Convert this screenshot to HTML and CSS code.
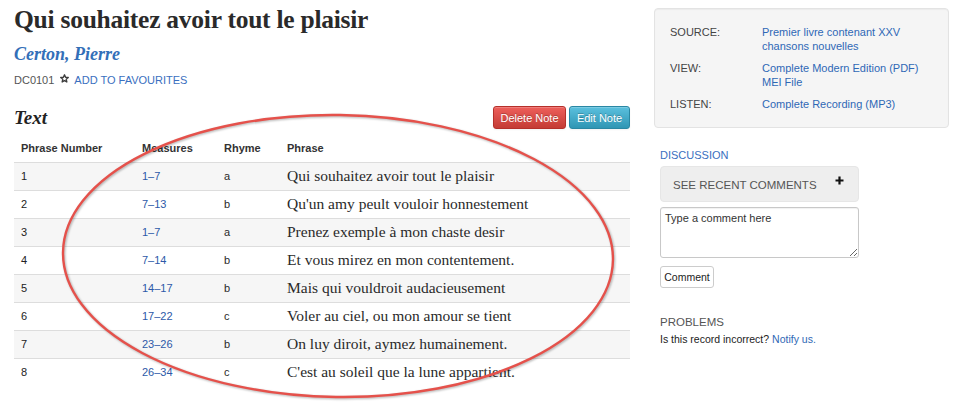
FILE: index.html
```html
<!DOCTYPE html>
<html lang="fr">
<head>
<meta charset="utf-8">
<title>Qui souhaitez avoir tout le plaisir</title>
<link rel="stylesheet" href="styles.css">
</head>
<body>
<div class="page">
  <main class="main">
    <h1 class="title">Qui souhaitez avoir tout le plaisir</h1>
    <h2 class="author"><a href="#">Certon, Pierre</a></h2>
    <div class="meta">
      <span class="code">DC0101</span>
      <svg class="star" width="9" height="9" viewBox="0 0 10 10"><polygon points="5,0.9 6.2,3.7 9.2,3.9 6.9,5.9 7.6,8.9 5,7.3 2.4,8.9 3.1,5.9 0.8,3.9 3.8,3.7" fill="none" stroke="#3d3d3d" stroke-width="1.5" stroke-linejoin="round"/></svg>
      <a class="fav" href="#">ADD TO FAVOURITES</a>
    </div>
    <div class="section-head">
      <h3 class="section-title">Text</h3>
      <div class="actions">
        <button class="btn btn-danger">Delete Note</button>
        <button class="btn btn-info">Edit Note</button>
      </div>
    </div>
    <table class="phrases">
      <colgroup>
        <col class="c-num"><col class="c-meas"><col class="c-rhyme"><col class="c-phrase">
      </colgroup>
      <thead>
        <tr><th>Phrase Number</th><th>Measures</th><th>Rhyme</th><th>Phrase</th></tr>
      </thead>
      <tbody>
        <tr><td class="num">1</td><td><a href="#">1–7</a></td><td>a</td><td class="verse">Qui souhaitez avoir tout le plaisir</td></tr>
        <tr><td class="num">2</td><td><a href="#">7–13</a></td><td>b</td><td class="verse">Qu'un amy peult vouloir honnestement</td></tr>
        <tr><td class="num">3</td><td><a href="#">1–7</a></td><td>a</td><td class="verse">Prenez exemple à mon chaste desir</td></tr>
        <tr><td class="num">4</td><td><a href="#">7–14</a></td><td>b</td><td class="verse">Et vous mirez en mon contentement.</td></tr>
        <tr><td class="num">5</td><td><a href="#">14–17</a></td><td>b</td><td class="verse">Mais qui vouldroit audacieusement</td></tr>
        <tr><td class="num">6</td><td><a href="#">17–22</a></td><td>c</td><td class="verse">Voler au ciel, ou mon amour se tient</td></tr>
        <tr><td class="num">7</td><td><a href="#">23–26</a></td><td>b</td><td class="verse">On luy diroit, aymez humainement.</td></tr>
        <tr><td class="num">8</td><td><a href="#">26–34</a></td><td>c</td><td class="verse">C'est au soleil que la lune appartient.</td></tr>
      </tbody>
    </table>
  </main>
  <aside class="side">
    <div class="well">
      <dl class="info">
        <dt>SOURCE:</dt>
        <dd><a href="#">Premier livre contenant XXV chansons nouvelles</a></dd>
        <dt>VIEW:</dt>
        <dd><a href="#">Complete Modern Edition (PDF)</a><br><a href="#">MEI File</a></dd>
        <dt>LISTEN:</dt>
        <dd><a href="#">Complete Recording (MP3)</a></dd>
      </dl>
    </div>
    <div class="discussion">
      <div class="side-label blue">DISCUSSION</div>
      <div class="comments-toggle">
        <span>SEE RECENT COMMENTS</span>
        <svg class="plus" width="9" height="9" viewBox="0 0 9 9"><path d="M4.5 0.5V8.5M0.5 4.5H8.5" stroke="#111" stroke-width="2.2"/></svg>
      </div>
      <textarea class="comment-box" placeholder="Type a comment here"></textarea>
      <button class="btn-plain">Comment</button>
      <div class="side-label problems">PROBLEMS</div>
      <p class="problem-text">Is this record incorrect? <a href="#">Notify us.</a></p>
    </div>
  </aside>
</div>
<svg class="annotation" width="978" height="404" viewBox="0 0 978 404">
  <ellipse cx="338" cy="256" rx="275" ry="141" transform="rotate(0.8 338 256)" fill="none" stroke="#e5514b" stroke-width="2.4"/>
</svg>
</body>
</html>
```
FILE: styles.css
```css
* { box-sizing: border-box; }
html, body { margin: 0; padding: 0; background: #fff; }
body {
  font-family: "Liberation Sans", Arial, sans-serif;
  font-size: 11px;
  color: #333;
  width: 978px;
  height: 404px;
  overflow: hidden;
  position: relative;
}
a { color: #2f68b5; text-decoration: none; }

.page {
  display: grid;
  grid-template-columns: 616px 295px;
  column-gap: 24px;
  padding-left: 14px;
}

.title {
  margin: 4px 0 0;
  font-family: "Liberation Serif", "Times New Roman", serif;
  font-weight: bold;
  font-size: 25.5px;
  line-height: 32px;
  letter-spacing: -0.25px;
  color: #2a2a2a;
}
.author {
  margin: 6px 0 0;
  font-family: "Liberation Serif", "Times New Roman", serif;
  font-style: italic;
  font-weight: bold;
  font-size: 18px;
  line-height: 24px;
}
.author a { color: #336fb8; }

.meta {
  margin-top: 6px;
  line-height: 16px;
  font-size: 11px;
  display: flex;
  align-items: center;
}
.code { color: #555; }
.star { margin: -3px 5px 0 6px; }
.fav { color: #3a6fc0; }

.section-head {
  margin-top: 18px;
  display: flex;
  justify-content: space-between;
  align-items: flex-start;
  height: 24px;
}
.section-title {
  margin: 0;
  font-family: "Liberation Serif", "Times New Roman", serif;
  font-style: italic;
  font-weight: bold;
  font-size: 19px;
  line-height: 24px;
  color: #222;
}
.actions { display: flex; gap: 3px; }
.btn {
  height: 23px;
  border-radius: 3px;
  font-family: "Liberation Sans", Arial, sans-serif;
  font-size: 11px;
  color: #fff;
  padding: 0;
  white-space: nowrap;
  text-align: center;
  text-shadow: 0 -1px 0 rgba(0,0,0,0.25);
  box-shadow: inset 0 1px 0 rgba(255,255,255,0.2), 0 1px 2px rgba(0,0,0,0.05);
}
.btn-danger {
  width: 73px;
  background: linear-gradient(#ee5f5b, #c43c35);
  border: 1px solid #b5302a;
}
.btn-info {
  width: 61px;
  background: linear-gradient(#5bc0de, #2f96b4);
  border: 1px solid #2a87a3;
}

.phrases {
  margin-top: 5px;
  width: 616px;
  border-collapse: collapse;
  table-layout: fixed;
}
.c-num { width: 121px; }
.c-meas { width: 82px; }
.c-rhyme { width: 63px; }
.phrases th, .phrases td {
  text-align: left;
  padding: 3px 7px 4px;
  line-height: 20px;
  vertical-align: top;
  white-space: nowrap;
}
.phrases th { font-weight: bold; font-size: 11px; color: #333; }
.phrases td { border-top: 1px solid #dddddd; font-size: 11px; color: #2a2a2a; }
.phrases td.num { color: #222; }
.phrases tbody tr:nth-child(odd) td { background: #f6f6f6; }
.phrases td a { color: #2d59a8; }
.phrases td.verse {
  font-family: "Liberation Serif", "Times New Roman", serif;
  font-size: 15.5px;
  color: #2a2a2a;
}

.side { padding-top: 8px; }
.well {
  height: 120px;
  background: #f5f5f5;
  border: 1px solid #e3e3e3;
  border-radius: 4px;
  padding: 16px 15px 15px;
  box-shadow: inset 0 1px 1px rgba(0,0,0,0.04);
}
.info {
  margin: 0;
  display: grid;
  grid-template-columns: 92px 1fr;
  row-gap: 8px;
  line-height: 14px;
  font-size: 11px;
}
.info dt { color: #444; }
.info dd { margin: 0; }
.info dd a { color: #2f68b5; }

.discussion { padding-left: 6px; }
.side-label { font-size: 11px; line-height: 14px; }
.blue { margin-top: 20px; color: #3a6fc0; }
.comments-toggle {
  margin-top: 4px;
  width: 199px;
  height: 36px;
  background: #eeeeee;
  border: 1px solid #e6e6e6;
  border-radius: 4px;
  position: relative;
  padding: 11px 0 0 12px;
  font-size: 11.5px;
  line-height: 14px;
  color: #555;
}
.plus { position: absolute; right: 14px; top: 9px; }
.comment-box {
  display: block;
  margin: 5px 0 0;
  width: 199px;
  height: 51px;
  border: 1px solid #c8c8c8;
  border-radius: 3px;
  padding: 3px 4px;
  font-family: "Liberation Sans", Arial, sans-serif;
  font-size: 11px;
  line-height: 14px;
  resize: vertical;
  box-shadow: inset 0 1px 1px rgba(0,0,0,0.06);
}
.comment-box::placeholder { color: #333; opacity: 1; }
.btn-plain {
  display: block;
  margin-top: 8px;
  height: 22px;
  width: 54px;
  padding: 0;
  text-align: center;
  background: #fff;
  border: 1px solid #ccc;
  border-radius: 3px;
  font-family: "Liberation Sans", Arial, sans-serif;
  font-size: 10.5px;
  color: #222;
}
.problems { margin-top: 27px; color: #555; font-size: 11.5px; }
.problem-text {
  margin: 3px 0 0;
  font-size: 10.5px;
  line-height: 14px;
  color: #222;
}
.problem-text a { color: #2f68b5; }

.annotation {
  position: absolute;
  left: 0;
  top: 0;
  pointer-events: none;
  filter: drop-shadow(1px 1px 1px rgba(0,0,0,0.3));
}
```
